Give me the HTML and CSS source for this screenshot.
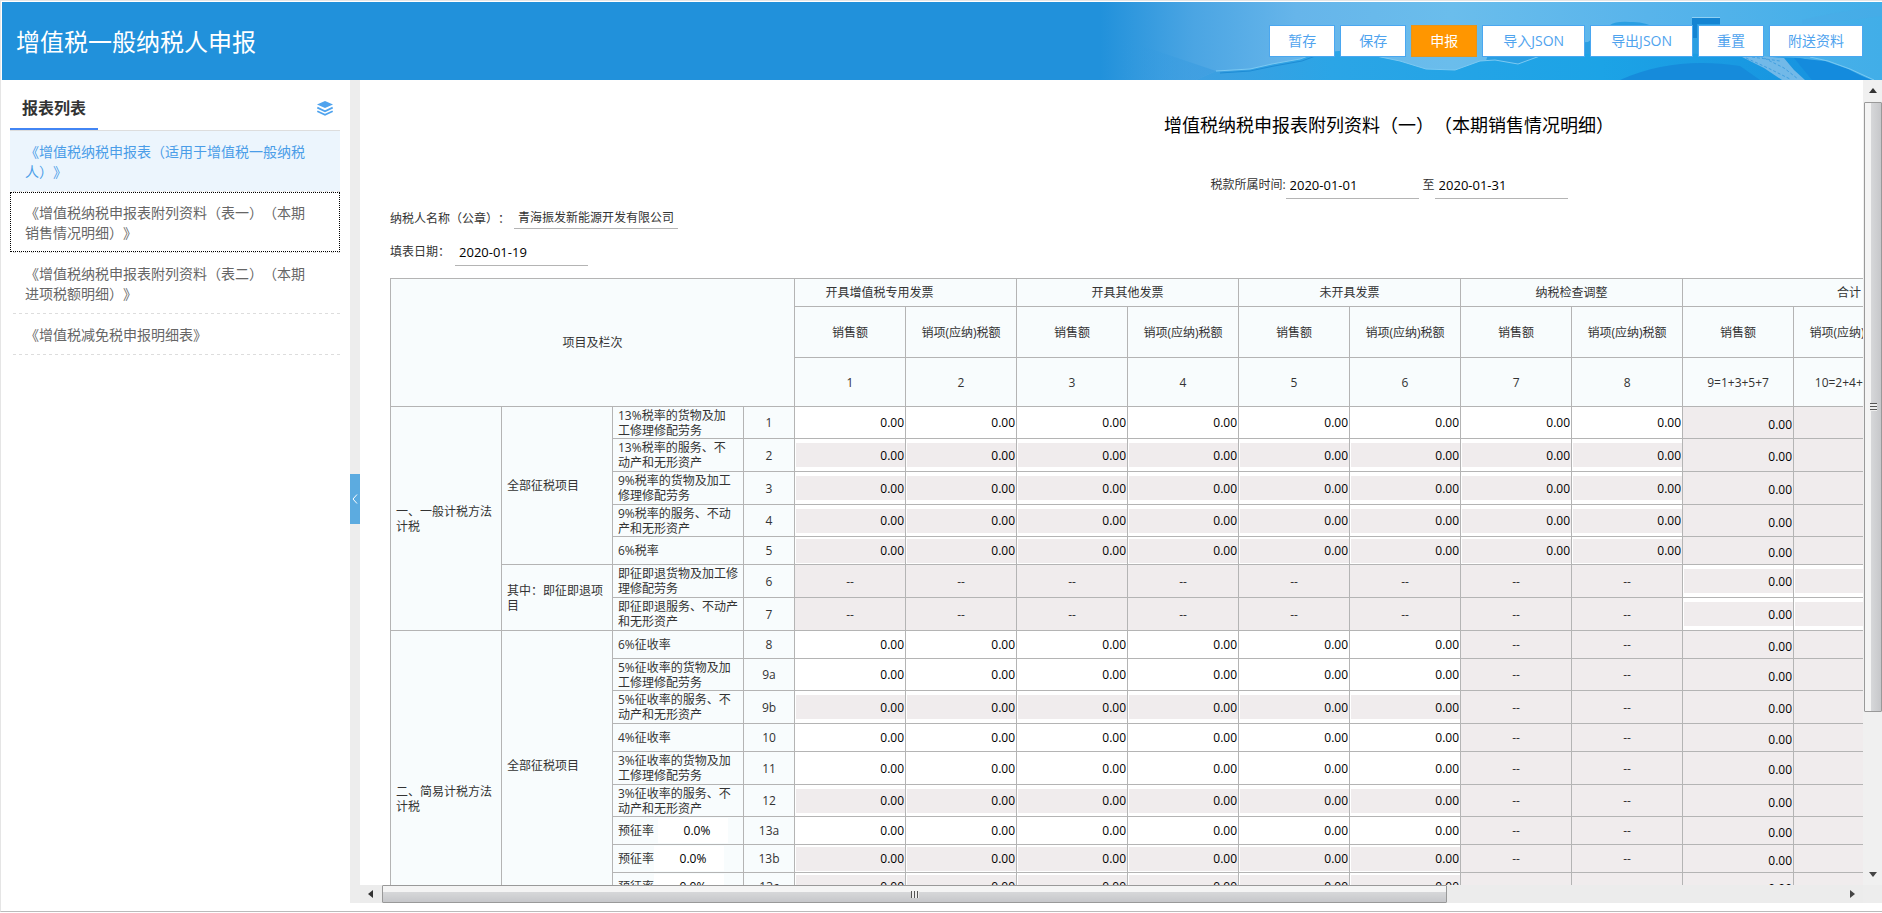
FILE: index.html
```html
<!DOCTYPE html>
<html lang="zh-CN">
<head>
<meta charset="utf-8">
<title>增值税一般纳税人申报</title>
<link rel="stylesheet" href="styles.css">
</head>
<body>
<div class="app">
  <header class="topbar">
    <svg class="topbar-art" viewBox="0 0 782 78" preserveAspectRatio="none" aria-hidden="true">
      <defs>
        <linearGradient id="sky" x1="0" x2="1" y1="0" y2="0">
          <stop offset="0" stop-color="#2191db"/>
          <stop offset=".12" stop-color="#4ba5e3"/>
          <stop offset=".25" stop-color="#66b5ea"/>
          <stop offset=".45" stop-color="#6abdec"/>
          <stop offset=".7" stop-color="#58b4eb"/>
          <stop offset="1" stop-color="#41aee8"/>
        </linearGradient>
        <linearGradient id="sea" x1="0" x2="1" y1="0" y2="0">
          <stop offset="0" stop-color="#3d9fe1"/>
          <stop offset=".2" stop-color="#2ba5e6"/>
          <stop offset=".6" stop-color="#1ca3e6"/>
          <stop offset="1" stop-color="#1690de"/>
        </linearGradient>
        <linearGradient id="slope" x1="0" x2="1" y1="0" y2="0">
          <stop offset="0" stop-color="#2f98df" stop-opacity="0"/>
          <stop offset="1" stop-color="#3a9ce0" stop-opacity=".7"/>
        </linearGradient>
      </defs>
      <rect width="782" height="78" fill="url(#sky)"/>
      <path d="M20 78V36L60 50L116 69L96 78Z" fill="url(#slope)"/>
      <path d="M510 23Q516 19 530 20Q545 19 560 28L592 28V15H620V28L634 36L640 52L700 62V78H380L390 46L488 40Z" fill="#2a9fe2"/>
      <path d="M592 16H620V22H597V36H592Z" fill="#1484d2"/>
      <path d="M592 15.500H620" stroke="#8fd0f3"/>
      <path d="M96 78L116 69L150 67L172 62L200 57L216 51L250 48L280 55L300 59L326 67L355 68L380 59L395 58L418 62L440 54L480 52L560 50L640 54L700 56L730 62L772 78Z" fill="url(#sea)"/>
      <path d="M116 69L150 67L172 62L200 57L216 51M276 54L300 59L326 67L355 68L380 59L395 58L418 62L440 54" fill="none" stroke="#7cc9f2" stroke-width="1"/>
      <path d="M120 71L150 69L174 64L202 59L218 53" fill="none" stroke="#1d8cd5" stroke-width="1"/>
      <path d="M520 78C560 60 600 58 640 64L660 78Z" fill="#168bdb"/>
      <path d="M640 54L662 54L684 56L694 68L705 78H682L664 66Z" fill="#72b9e8"/>
      <path d="M646 56L668 66L690 77M660 54L684 66L698 77M652 55L680 59" fill="none" stroke="#3f9fe0" stroke-width="1" stroke-dasharray="3 2"/>
      <path d="M694 56L725 59L748 67L770 78H712Z" fill="#148bdd"/>
      <path d="M710 55L728 59L750 67L774 78" fill="none" stroke="#79c8f2"/>
      <path d="M702 18Q735 10 782 4V14Q740 20 702 22Z" fill="#4aa9e6" opacity=".4"/>
    </svg>
    <h1 class="topbar-title">增值税一般纳税人申报</h1>
    <div class="actions">
      <button type="button" class="btn">暂存</button>
      <button type="button" class="btn">保存</button>
      <button type="button" class="btn btn-primary">申报</button>
      <button type="button" class="btn btn-wide">导入JSON</button>
      <button type="button" class="btn btn-wide">导出JSON</button>
      <button type="button" class="btn">重置</button>
      <button type="button" class="btn">附送资料</button>
    </div>
  </header>

  <div class="body">
    <nav class="sidebar">
      <div class="side-head">
        <h2 class="side-title">报表列表</h2>
        <svg class="layers" viewBox="0 0 16 15" width="16" height="15" aria-hidden="true">
          <path d="M8 0L16 3.500L8 7L0 3.500Z" fill="#4fa3ee"/>
          <path d="M0.300 6.600L8 10.200L15.700 6.600M0.300 10.200L8 13.800L15.700 10.200" fill="none" stroke="#4fa3ee" stroke-width="1.800"/>
        </svg>
      </div>
      <ul class="reports">
        <li><a class="report is-active" href="#r1">《增值税纳税申报表（适用于增值税一般纳税人）》</a></li>
        <li><a class="report is-focus" href="#r2">《增值税纳税申报表附列资料（表一）（本期销售情况明细）》</a></li>
        <li><a class="report" href="#r3">《增值税纳税申报表附列资料（表二）（本期进项税额明细）》</a></li>
        <li><a class="report" href="#r4">《增值税减免税申报明细表》</a></li>
      </ul>
    </nav>

    <div class="splitter">
      <button type="button" class="collapse" aria-label="收起">
        <svg viewBox="0 0 6 10" width="6" height="10" aria-hidden="true"><path d="M5 .5L1 5L5 9.500" fill="none" stroke="#fff" stroke-width="1"/></svg>
      </button>
    </div>

    <main class="pane">
      <div class="viewport">
        <div class="sheet">
          <h2 class="sheet-title">增值税纳税申报表附列资料（一）（本期销售情况明细）</h2>
          <div class="period">
            <label for="from">税款所属时间:</label>
            <input id="from" class="line-input" value="2020-01-01">
            <label for="to" class="to">至</label>
            <input id="to" class="line-input" value="2020-01-31">
          </div>
          <div class="payer">
            <span>纳税人名称（公章）：</span><span class="payer-name">青海振发新能源开发有限公司</span>
          </div>
          <div class="filled">
            <label for="filled">填表日期：</label>
            <input id="filled" class="line-input" value="2020-01-19">
          </div>
          <table class="grid">
            <colgroup>
              <col class="c-num"><col class="c-num"><col class="c-name"><col class="c-idx">
              <col class="c-num"><col class="c-num"><col class="c-num"><col class="c-num"><col class="c-num"><col class="c-num">
              <col class="c-num"><col class="c-num"><col class="c-num"><col class="c-num"><col class="c-num">
            </colgroup>
            <thead>
              <tr class="h-group">
                <th colspan="4" rowspan="3">项目及栏次</th>
                <th colspan="2" class="first-group">开具增值税专用发票</th><th colspan="2">开具其他发票</th><th colspan="2">未开具发票</th><th colspan="2">纳税检查调整</th><th colspan="3">合计</th>
              </tr>
              <tr class="h-sub">
                <th>销售额</th><th>销项(应纳)税额</th><th>销售额</th><th>销项(应纳)税额</th><th>销售额</th><th>销项(应纳)税额</th><th>销售额</th><th>销项(应纳)税额</th><th>销售额</th><th>销项(应纳)税额</th><th>价税合计</th>
              </tr>
              <tr class="h-no">
                <th>1</th><th>2</th><th>3</th><th>4</th><th>5</th><th>6</th><th>7</th><th>8</th><th>9=1+3+5+7</th><th>10=2+4+6+8</th><th>11=9+10</th>
              </tr>
            </thead>
            <tbody id="rows"></tbody>
          </table>
        </div>
      </div>
      <div class="bar bar-v" aria-hidden="true">
        <i class="arrow up"></i>
        <div class="track-v"><div class="thumb thumb-v"><i class="grip grip-v"></i></div></div>
        <i class="arrow down"></i>
      </div>
      <div class="bar bar-h" aria-hidden="true">
        <i class="arrow left"></i>
        <div class="track-h"><div class="thumb thumb-h"><i class="grip grip-h"></i></div></div>
        <i class="arrow right"></i>
      </div>
      <div class="corner"></div>
    </main>
  </div>
</div>
<script src="app.js"></script>
</body>
</html>
```
FILE: styles.css
```css
* { box-sizing: border-box; }

html, body { height: 100%; }

body {
  margin: 0;
  overflow: hidden;
  background: #fff;
  color: #333;
  font: 12px/16px "Open Sans", "Noto Sans CJK SC", sans-serif;
  text-spacing-trim: space-all;
}

button, input { font: inherit; }

.app {
  display: flex;
  flex-direction: column;
  height: calc(100% - 1px);
  padding: 1px 0 8px 1px;
  border-top: 1px solid #e5e5e5;
  border-left: 1px solid #e5e5e5;
  border-bottom: 1px solid #bbb;
}

.topbar {
  position: relative;
  display: flex;
  flex: none;
  align-items: center;
  justify-content: space-between;
  height: 78px;
  padding: 0 19px 0 14px;
  background: #2191db;
}

.topbar-art {
  position: absolute;
  top: 0;
  right: 0;
  width: 782px;
  height: 100%;
}

.topbar-title {
  margin: 0;
  padding-top: 1px;
  color: #fff;
  font-size: 24px;
  font-weight: 400;
  line-height: 32px;
}

.actions { position: relative; display: flex; gap: 5px; }

.btn {
  height: 32px;
  padding: 0 18px;
  border: 1px solid #4aa7f0;
  background: #fff;
  color: #4fa3ee;
  font-size: 14px;
  line-height: 28px;
  white-space: nowrap;
}

.btn-wide { padding: 0 20px; }

.btn-primary { background: #ff9600; border-color: #e8941a; color: #fff; }

.body { display: flex; flex: 1; min-height: 0; }

.sidebar { flex: none; width: 348px; padding: 0 10px 0 8px; }

.side-head {
  display: flex;
  align-items: center;
  justify-content: space-between;
  height: 51px;
  padding-right: 7px;
  border-bottom: 1px solid #ddd;
}

.side-title {
  align-self: stretch;
  width: 88px;
  margin: 0;
  padding: 9px 0 0 12px;
  border-bottom: 2px solid #4285f4;
  font-size: 16px;
  font-weight: 700;
  line-height: 39px;
}

.layers { margin-top: 6px; }

.reports { margin: 0; padding: 0; list-style: none; }

.reports li {
  padding-bottom: 1px;
  background: repeating-linear-gradient(90deg, transparent 0 3px, #ddd 3px 6px) bottom / 100% 1px no-repeat;
}

.report {
  display: block;
  padding: 11px 30px 9px 15px;
  color: #666;
  font-size: 14px;
  line-height: 20px;
  text-decoration: none;
}

.is-active { background: #ecf5fd; color: #4a9de8; }

.is-focus { outline: 1px dotted #000; outline-offset: -1px; }

.splitter {
  display: flex;
  flex: none;
  align-items: center;
  width: 10px;
  background: #ededed;
}

.collapse {
  display: flex;
  align-items: center;
  justify-content: center;
  width: 10px;
  height: 50px;
  margin-bottom: -14px;
  padding: 0;
  border: 0;
  background: #5cabe0;
}

.pane {
  display: grid;
  flex: 1;
  grid-template: 1fr 18px / 1fr 19px;
  min-width: 0;
}

.viewport { min-width: 0; min-height: 0; overflow: hidden; }

.sheet { width: 2028px; padding: 0 0 30px 30px; }

.sheet-title {
  margin: 0;
  padding: 29px 0 28px;
  color: #000;
  font-size: 18px;
  font-weight: 400;
  line-height: 32px;
  text-align: center;
}

.period {
  display: flex;
  align-items: center;
  justify-content: center;
  height: 32px;
}

.to { padding: 0 0 0 4px; }

.line-input {
  width: 133px;
  height: 28px;
  padding: 0 4px;
  border: 0;
  border-bottom: 1px solid #b4b4b4;
  background: transparent;
  color: #000;
  font-size: 13px;
}

.payer { display: flex; align-items: center; margin-top: 8px; }

.payer-name {
  margin-left: 4px;
  padding: 1px 4px 2px;
  border-bottom: 1px solid #b4b4b4;
}

.filled { display: flex; align-items: center; gap: 5px; margin: 9px 0 12px; }

.grid {
  border-collapse: collapse;
  table-layout: fixed;
  width: 1626px;
  color: #333;
  line-height: 15px;
}

.c-num { width: 111px; }
.c-name { width: 131px; }
.c-idx { width: 51px; }

.grid th, .grid td {
  padding: 0;
  border: 1px solid #b4b4b4;
  font-weight: 400;
  text-align: center;
}

.grid th { background: #f8fcfd; }
.grid tbody th { padding: 0 4px 0 5px; text-align: left; }
.grid tbody th.idx { padding: 0; text-align: center; }
.grid th.first-group { padding-right: 52px; }

.h-group { height: 28px; }
.h-sub { height: 51px; }
.h-no { height: 49px; }

.row-s { height: 28px; }
.row-m { height: 32px; }
.row-l { height: 33px; }

.grid td.off { background: #f0eced; }

.amount {
  display: block;
  width: calc(100% - 1px);
  height: 24px;
  margin-left: 1px;
  padding: 0 1px 0 0;
  border: 0;
  background: #fff;
  color: #000;
  text-align: right;
}

.amount.locked { background: #f0eced; }
.off .amount { height: 20px; margin-top: 3px; background: transparent; }

.rate { display: flex; align-items: center; }
.rate-spaced { gap: 4px; }

.rate-input {
  width: 70px;
  height: 25px;
  padding: 0 0 0 8px;
  border: 0;
  background: #fff;
  color: #000;
  text-align: center;
}

.bar { display: flex; align-items: center; background: #ececec; }
.bar-v { flex-direction: column; padding: 8px 0; background: #f0f0f0; }
.bar-h { padding: 0 8px; }
.corner { background: #ededed; }

.arrow { width: 0; height: 0; border: 4px solid transparent; }
.up { border-top: 0; border-bottom: 5px solid #333; }
.down { border-bottom: 0; border-top: 5px solid #444; }
.left { border-left: 0; border-right: 5px solid #333; }
.right { border-right: 0; border-left: 5px solid #444; }

.track-v { flex: 1; width: 100%; padding: 9px 0 8px 1px; }
.track-h { flex: 1; height: 100%; padding: 0 9px; }

.thumb {
  display: flex;
  align-items: center;
  justify-content: center;
  border: 1px solid #999;
  border-radius: 1px;
}

.thumb-v { height: 80%; background: linear-gradient(90deg, #f4f4f4 0 35%, #d6d7d9 40%, #c6c7ca); }
.thumb-h { width: 73%; height: 100%; background: linear-gradient(#f4f4f4 0 35%, #d6d7d9 40%, #c6c7ca); }

.grip-v { width: 7px; height: 8px; background: repeating-linear-gradient(#555 0 1px, #eee 1px 3px); }
.grip-h { width: 8px; height: 7px; background: repeating-linear-gradient(90deg, #555 0 1px, #eee 1px 3px); }
```
FILE: app.js
```js
// name: row label, no: line number, size: row height class,
// cells: one letter per column - w editable, g locked, o calculated, x not applicable
const rows = [
  { section: ["一、一般计税方法计税", 7], group: ["全部征税项目", 5], name: "13%税率的货物及加<br>工修理修配劳务", no: "1", size: "m", cells: "wwwwwwwwooo" },
  { name: "13%税率的服务、不<br>动产和无形资产", no: "2", size: "l", cells: "ggggggggooo" },
  { name: "9%税率的货物及加工<br>修理修配劳务", no: "3", size: "l", cells: "ggggggggooo" },
  { name: "9%税率的服务、不动<br>产和无形资产", no: "4", size: "m", cells: "ggggggggooo" },
  { name: "6%税率", no: "5", size: "s", cells: "ggggggggooo" },
  { group: ["其中：即征即退项目", 2], name: "即征即退货物及加工修理修配劳务", no: "6", size: "l", cells: "xxxxxxxxggg" },
  { name: "即征即退服务、不动产和无形资产", no: "7", size: "l", cells: "xxxxxxxxggg" },
  { section: ["二、简易计税方法计税", 11], group: ["全部征税项目", 9], name: "6%征收率", no: "8", size: "s", cells: "wwwwwwxxooo" },
  { name: "5%征收率的货物及加<br>工修理修配劳务", no: "9a", size: "m", cells: "wwwwwwxxooo" },
  { name: "5%征收率的服务、不<br>动产和无形资产", no: "9b", size: "l", cells: "ggggggxxooo" },
  { name: "4%征收率", no: "10", size: "s", cells: "wwwwwwxxooo" },
  { name: "3%征收率的货物及加<br>工修理修配劳务", no: "11", size: "l", cells: "wwwwwwxxooo" },
  { name: "3%征收率的服务、不<br>动产和无形资产", no: "12", size: "m", cells: "ggggggxxooo" },
  { name: "预征率", rate: "0.0%", spaced: true, no: "13a", size: "s", cells: "wwwwwwxxooo" },
  { name: "预征率", rate: "0.0%", no: "13b", size: "s", cells: "ggggggxxooo" },
  { name: "预征率", rate: "0.0%", no: "13c", size: "s", cells: "ggggggxxooo" },
  { group: ["其中：即征即退项目", 2], name: "即征即退货物及加工修理修配劳务", no: "14", size: "l", cells: "xxxxxxxxggg" },
  { name: "即征即退服务、不动产和无形资产", no: "15", size: "l", cells: "xxxxxxxxggg" }
];

const head = (pair) => pair ? `<th rowspan="${pair[1]}">${pair[0]}</th>` : "";

const cell = (kind, no, col) => {
  if (kind === "x") return '<td class="off">--</td>';
  const label = `aria-label="第${no}行第${col + 1}列"`;
  if (kind === "o") return `<td class="off"><input class="amount" value="0.00" readonly ${label}></td>`;
  return `<td><input class="amount${kind === "g" ? " locked" : ""}" value="0.00" ${label}></td>`;
};

document.getElementById("rows").innerHTML = rows.map((r) => {
  const name = r.rate
    ? `<div class="rate${r.spaced ? " rate-spaced" : ""}"><label for="rate-${r.no}">${r.name}</label><input id="rate-${r.no}" class="rate-input" value="${r.rate}"></div>`
    : r.name;
  return `<tr class="row-${r.size}">${head(r.section)}${head(r.group)}<th>${name}</th><th class="idx">${r.no}</th>${[...r.cells].map((k, i) => cell(k, r.no, i)).join("")}</tr>`;
}).join("");
```
